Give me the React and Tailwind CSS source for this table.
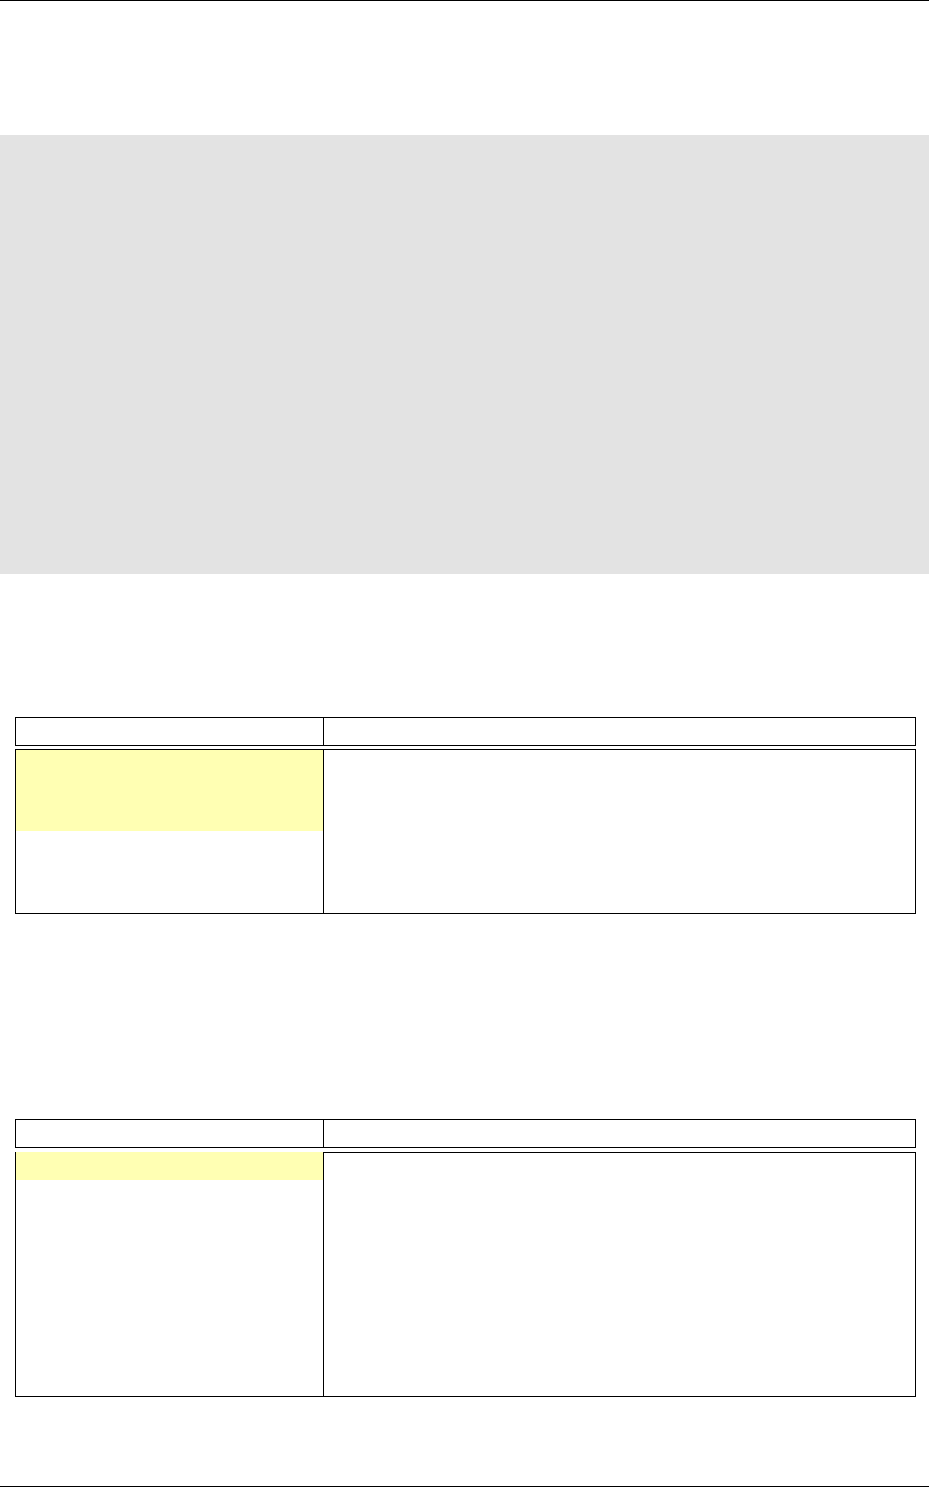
// Blank document page: header rule, shaded block, two empty two-column tables, footer rule
const TableBlock = ({ bodyHeight, markHeight, markOverTop }) => {
  return (
    <div className="ml-[15px] w-[901px]">
      <div className="flex h-[29px] border border-black">
        <div className="w-[308px] border-r border-black" />
        <div className="flex-1" />
      </div>
      <div
        className={`flex border border-black ${markOverTop ? 'mt-[4px]' : 'mt-[3px]'}`}
        style={{ height: bodyHeight }}
      >
        <div className="w-[308px] border-r border-black">
          <div
            className={`bg-[#ffffb3] ${markOverTop ? '-mt-px' : ''}`}
            style={{ height: markHeight }}
          />
        </div>
        <div className="flex-1" />
      </div>
    </div>
  )
}

const App = () => {
  return (
    <div className="w-[930px] h-[1487px] bg-white overflow-hidden font-['Liberation_Sans',sans-serif]">
      <div className="w-[929px] h-px bg-black" />

      <div className="mt-[134px] w-[929px] h-[439px] bg-[#e3e3e3]" />

      <div className="mt-[143px]">
        <TableBlock bodyHeight={165} markHeight={81} />
      </div>

      <div className="mt-[205px]">
        <TableBlock bodyHeight={245} markHeight={28} markOverTop />
      </div>

      <div className="mt-[89px] w-[929px] h-px bg-black" />
    </div>
  )
}

export default App
